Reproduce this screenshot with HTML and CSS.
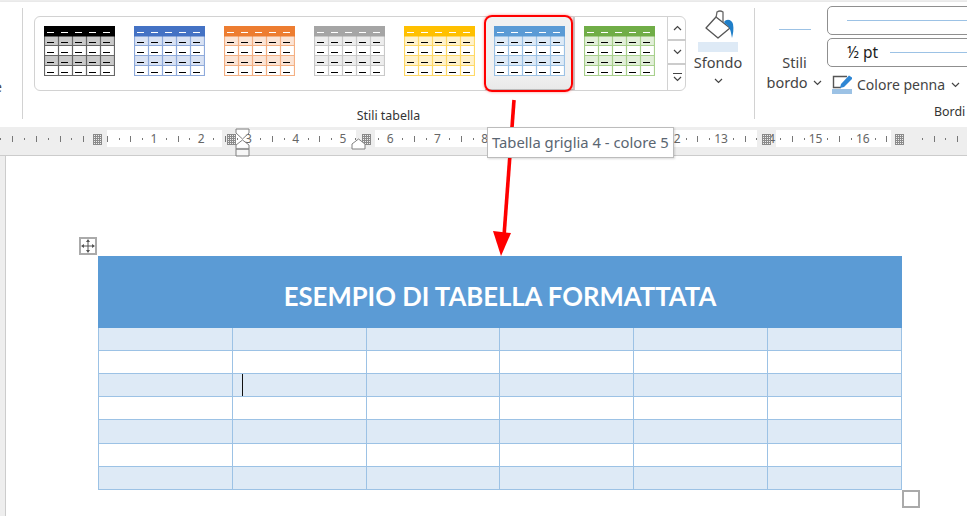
FILE: index.html
```html
<!DOCTYPE html>
<html lang="it">
<head>
<meta charset="UTF-8">
<meta name="viewport" content="width=device-width, initial-scale=1.0">
<title>Stili tabella</title>
<link rel="stylesheet" href="styles.css">
</head>
<body>

<!-- shared shapes -->
<svg class="defs" width="0" height="0" aria-hidden="true">
  <symbol id="thumb" viewBox="0 0 71 50">
    <rect width="71" height="50" fill="#fff"/>
    <rect y="10" width="71" height="10" style="fill:var(--band)"/>
    <rect y="30" width="71" height="10" style="fill:var(--band)"/>
    <path d="M.5 10V49.5H70.5V10M.5 19.5H70.5M.5 29.5H70.5M.5 39.5H70.5M14.5 10V50M28.5 10V50M42.5 10V50M56.5 10V50" fill="none" stroke-width="1.2" style="stroke:var(--line)"/>
    <rect width="71" height="10.5" style="fill:var(--head)"/>
    <path d="M3 6.5H10M17 6.5H24M31 6.5H38M45 6.5H52M59 6.5H66" stroke="#fff" fill="none"/>
    <path d="M3 16.5H10M17 16.5H24M31 16.5H38M45 16.5H52M59 16.5H66M3 26.5H10M17 26.5H24M31 26.5H38M45 26.5H52M59 26.5H66M3 36.5H10M17 36.5H24M31 36.5H38M45 36.5H52M59 36.5H66M3 46.5H10M17 46.5H24M31 46.5H38M45 46.5H52M59 46.5H66" stroke="#000" fill="none"/>
  </symbol>
  <symbol id="chev" viewBox="0 0 9 6">
    <path d="M1 1L4.5 4.5L8 1" fill="none" stroke="#444" stroke-width="1.2"/>
  </symbol>
</svg>

<div class="page">
  <div class="top-strip"></div>

  <!-- Ribbon -->
  <div class="ribbon">
    <div class="group group-stub"><span class="stub-text">e</span></div>

    <div class="group group-styles">
      <div class="styles-row">
        <div class="gallery">
          <div class="item black"><svg class="thumb"><use href="#thumb"/></svg></div>
          <div class="item blue"><svg class="thumb"><use href="#thumb"/></svg></div>
          <div class="item orange"><svg class="thumb"><use href="#thumb"/></svg></div>
          <div class="item gray"><svg class="thumb"><use href="#thumb"/></svg></div>
          <div class="item yellow"><svg class="thumb"><use href="#thumb"/></svg></div>
          <div class="item sky selected"><svg class="thumb"><use href="#thumb"/></svg><div class="red-box"></div></div>
          <div class="item green"><svg class="thumb"><use href="#thumb"/></svg></div>
          <div class="scroller">
            <div class="scroll-btn"><svg class="chev up"><use href="#chev"/></svg></div>
            <div class="scroll-btn"><svg class="chev"><use href="#chev"/></svg></div>
            <div class="scroll-btn more"><span class="more-bar"></span><svg class="chev"><use href="#chev"/></svg></div>
          </div>
        </div>
        <div class="sfondo">
          <svg class="bucket" viewBox="0 0 36 30">
            <path d="M7 18L17 7L31 18L19 28Z" fill="#fff" stroke="#555" stroke-width="1.3" stroke-linejoin="round"/>
            <path d="M17 8L18 2Q21 0 24 2L24 12" fill="none" stroke="#666" stroke-width="1.3"/>
            <path d="M25 12C28 8 33 10 34 14C35 19 34 24 33 28C32 22 31 17 28 15Q26 14 25 12Z" fill="#1f7fc9"/>
          </svg>
          <div class="sfondo-bar"></div>
          <div class="sfondo-label">Sfondo</div>
          <svg class="chev"><use href="#chev"/></svg>
        </div>
      </div>
      <div class="group-label">Stili tabella</div>
    </div>

    <div class="group group-borders">
      <div class="border-styles">
        <div class="sample-line"></div>
        <div class="bs-label">Stili</div>
        <div class="bs-label">bordo <svg class="chev"><use href="#chev"/></svg></div>
      </div>
      <div class="border-tools">
        <div class="combo"><span class="combo-line first"></span></div>
        <div class="combo"><span class="combo-text">½ pt</span><span class="combo-line"></span></div>
        <div class="pen-row">
          <svg class="pen" viewBox="0 0 20 20">
            <path d="M9 13.5H1.5V2.5H15" fill="none" stroke="#555" stroke-width="1.4"/>
            <path d="M8 14L9 10L17 1.5L20 3.5V5L12 13Z" fill="#2e86d4"/>
            <rect y="15" width="20" height="5" fill="#9cc2e5"/>
          </svg>
          <span>Colore penna</span>
          <svg class="chev"><use href="#chev"/></svg>
        </div>
        <div class="bordi-label">Bordi</div>
      </div>
    </div>
  </div>

  <!-- Ruler -->
  <div class="ruler">
    <div class="ruler-band">
      <span class="rc blank"></span><span class="rc blank"></span><span class="rc blank"></span>
      <span class="rc">1</span><span class="rc">2</span><span class="rc">3</span><span class="rc">4</span>
      <span class="rc">5</span><span class="rc">6</span><span class="rc">7</span><span class="rc">8</span>
      <span class="rc">&nbsp;</span><span class="rc">&nbsp;</span><span class="rc">&nbsp;</span><span class="rc">12</span>
      <span class="rc">13</span><span class="rc">14</span><span class="rc">15</span><span class="rc">16</span>
      <span class="rc">&nbsp;</span><span class="rc blank"></span>
    </div>
    <i class="hatch h1"></i><i class="hatch h2"></i><i class="hatch h3"></i><i class="hatch h4"></i><i class="hatch h5"></i>
    <svg class="indent-top" viewBox="0 0 15 29">
      <path d="M1 1H14V5L7.5 11L1 5ZM7.5 12L14 17V21H1V17ZM1 21H14V28H1Z" fill="#fff" fill-opacity=".55" stroke="#808080"/>
    </svg>
    <svg class="indent-right" viewBox="0 0 15 12">
      <path d="M1 11V6L7.5 1L14 6V11Z" fill="#fff" stroke="#808080"/>
    </svg>
  </div>

  <!-- Document -->
  <div class="doc">
    <div class="gutter"></div>
    <div class="sheet">
      <div class="table-wrap">
        <div class="move-handle">
          <svg viewBox="0 0 14 14" width="14" height="14">
            <path d="M7 1V13M1 7H13" stroke="#555" fill="none"/>
            <path d="M7 0L9 3H5ZM7 14L5 11H9ZM0 7L3 5V9ZM14 7L11 9V5Z" fill="#555"/>
          </svg>
        </div>
        <table class="doc-table">
          <tr class="title-row"><td colspan="6">ESEMPIO DI TABELLA FORMATTATA</td></tr>
          <tr class="band"><td></td><td></td><td></td><td></td><td></td><td></td></tr>
          <tr><td></td><td></td><td></td><td></td><td></td><td></td></tr>
          <tr class="band"><td></td><td><span class="caret"></span></td><td></td><td></td><td></td><td></td></tr>
          <tr><td></td><td></td><td></td><td></td><td></td><td></td></tr>
          <tr class="band tall"><td></td><td></td><td></td><td></td><td></td><td></td></tr>
          <tr><td></td><td></td><td></td><td></td><td></td><td></td></tr>
          <tr class="band"><td></td><td></td><td></td><td></td><td></td><td></td></tr>
        </table>
        <div class="size-handle"></div>
      </div>
    </div>
  </div>

  <!-- Annotation arrow and tooltip -->
  <svg class="arrow" viewBox="0 0 967 516">
    <path d="M514 100L504 236" stroke="#f00" stroke-width="3.6" fill="none"/>
    <path d="M501 256L493 231L511 233Z" fill="#f00"/>
  </svg>
  <div class="tooltip">Tabella griglia 4 - colore 5</div>
</div>

</body>
</html>
```

FILE: styles.css
```css
:root { --ui-text:#444; --rule:#d2d2d2; --line-blue:#9cc2e5; --band-blue:#deeaf6; --head-blue:#5b9bd5; }
*{box-sizing:border-box;}
html,body{margin:0;padding:0;background:#fff;}
body{font-family:"Noto Sans","Open Sans",sans-serif;font-size:14px;color:var(--ui-text);width:967px;height:516px;overflow:hidden;}
.defs{position:absolute;}
.page{position:relative;width:967px;height:516px;overflow:hidden;}
.top-strip{height:2px;background:#ededed;}

/* Ribbon */
.ribbon{display:flex;height:125px;background:#fff;box-shadow:0 1px 2px rgba(0,0,0,.25);position:relative;overflow:hidden;}
.group{margin-top:6px;height:111px;flex:none;}
.group-stub{width:23px;border-right:1px solid var(--rule);position:relative;overflow:hidden;}
.stub-text{position:absolute;left:-6px;top:69px;}
.group-styles{width:732px;border-right:1px solid var(--rule);display:flex;flex-direction:column;}
.styles-row{display:flex;align-items:flex-start;padding-left:11px;}
.gallery{display:flex;width:652px;height:75px;margin-top:8px;border:1px solid var(--rule);border-radius:6px;flex:none;}
.item{width:90px;height:73px;padding:9px 0 0 9px;position:relative;flex:none;}
.thumb{display:block;width:71px;height:50px;}
.black{--head:#000;--band:#c9c9c9;--line:#666;}
.blue{--head:#4472c4;--band:#d9e2f3;--line:#8eaadb;}
.orange{--head:#ed7d31;--band:#fbe4d5;--line:#f4b083;}
.gray{--head:#a5a5a5;--band:#ededed;--line:#c9c9c9;}
.yellow{--head:#ffc000;--band:#fff2cc;--line:#ffd966;}
.sky{--head:#5b9bd5;--band:#deeaf6;--line:#9cc2e5;}
.green{--head:#70ad47;--band:#e2efd9;--line:#a8d08d;}
.selected{background:linear-gradient(#f1f1f1,#f1f1f1 80%,#e9e9e9);border-right:2px solid #ccc;border-bottom:1px solid #bbb;}
.red-box{position:absolute;left:-1px;top:-2px;width:89px;height:77px;border:2.5px solid #f00;border-radius:8px;box-shadow:0 0 3px rgba(255,0,0,.45);}
.scroller{margin-left:2px;width:19px;flex:none;border-left:1px solid var(--rule);display:flex;flex-direction:column;}
.scroll-btn{height:24px;display:flex;flex-direction:column;align-items:center;justify-content:center;border-bottom:2px solid #ccc;}
.scroll-btn.more{border-bottom:none;height:25px;}
.more-bar{width:9px;height:1px;background:#444;margin-bottom:2px;}
.chev{width:9px;height:6px;display:inline-block;}
.chev.up{transform:scaleY(-1);}
.sfondo{width:64px;display:flex;flex-direction:column;align-items:center;}
.bucket{width:36px;height:30px;margin:2px 0 0 -3px;display:block;}
.sfondo-bar{width:40px;height:10px;background:var(--band-blue);margin-top:2px;}
.sfondo-label{line-height:20px;font-size:14.5px;}
.sfondo .chev{margin-top:6px;}
.group-label{text-align:center;font-size:12.4px;line-height:16px;margin-top:17px;color:#333;}

.group-borders{display:flex;width:300px;}
.border-styles{width:72px;text-align:center;padding-left:7px;}
.sample-line{width:32px;height:1px;background:var(--line-blue);margin:21px 0 0 17px;}
.bs-label{line-height:20px;font-size:14.5px;white-space:nowrap;}
.border-styles .sample-line + .bs-label{margin-top:22px;}
.bs-label .chev{margin-left:2px;vertical-align:2px;}
.border-tools{flex:none;width:200px;margin-top:-2px;}
.combo{height:29px;border:1px solid #8f8f8f;border-radius:5px;margin-bottom:3px;display:flex;align-items:center;padding-left:19px;}
.combo-line{height:1px;background:var(--line-blue);flex:1;}
.combo-text{width:43px;font-size:15.5px;color:#222;line-height:16px;margin-top:-2px;}
.pen-row{display:flex;align-items:center;margin-top:8px;padding-left:5px;font-size:14px;white-space:nowrap;}
.pen{width:20px;height:20px;margin-right:5px;flex:none;margin-top:-1px;}
.pen-row .chev{margin-left:6px;}
.bordi-label{font-size:12.4px;line-height:16px;margin:10px 0 0 107px;color:#333;}

/* Ruler */
.ruler{position:relative;height:29px;background:#eee;border-bottom:1px solid #ccc;padding-top:3px;}
.ruler-band{height:17px;display:flex;margin-left:0;background:linear-gradient(to right,#eee 107px,#fff 107px 222px,#eee 222px 236px,#fff 236px 356px,#eee 356px 375px,#fff 375px 757px,#eee 757px 776px,#fff 776px 891px,#eee 891px);}
.rc{flex:none;width:47.25px;font-size:12px;line-height:17px;text-align:center;color:#666;
  background-image:linear-gradient(#777,#777),linear-gradient(#777,#777),linear-gradient(#777,#777);
  background-size:1px 6px,1px 2px,1px 2px;background-position:0 50%,11.8px 50%,35.4px 50%;background-repeat:no-repeat;}
.rc.blank{background-image:linear-gradient(#777,#777),linear-gradient(#777,#777),linear-gradient(#777,#777),linear-gradient(#777,#777);
  background-size:1px 6px,1px 6px,1px 2px,1px 2px;background-position:0 50%,23.6px 50%,11.8px 50%,35.4px 50%;}
.ruler-band .rc:first-child{margin-left:-11.35px;}
.hatch{position:absolute;top:7px;width:9px;height:11px;background-color:#eee;
  background-image:repeating-linear-gradient(90deg,#8a8a8a 0 1.4px,transparent 1.4px 2px),repeating-linear-gradient(0deg,#8a8a8a 0 1.4px,transparent 1.4px 2px);}
.h1{left:93px;} .h2{left:227px;} .h3{left:362px;} .h4{left:762px;} .h5{left:895px;}
.indent-top{position:absolute;left:235px;top:1px;width:15px;height:29px;}
.indent-right{position:absolute;left:351px;top:11px;width:15px;height:12px;}

/* Document */
.doc{display:flex;height:360px;background:#fff;}
.gutter{width:6px;background:#eee;border-right:1px solid #ccc;flex:none;}
.sheet{flex:1;padding:100px 0 0 92px;}
.table-wrap{position:relative;width:804px;}
.doc-table{width:804px;border-collapse:collapse;table-layout:fixed;}
.doc-table td{height:23px;border:1px solid var(--line-blue);padding:0 0 0 9px;}
.doc-table .tall td{height:24px;}
.band td{background:var(--band-blue);}
.title-row td{height:71px;background:var(--head-blue);border-color:var(--head-blue);padding:8px 0 0;text-align:center;color:#fff;font-family:Lato,"Noto Sans",sans-serif;font-weight:700;font-size:25.7px;}
.caret{display:block;width:1px;height:22px;background:#111;}
.move-handle{position:absolute;left:-19px;top:-19px;width:18px;height:18px;border:2px solid #aaa;background:#fff;display:flex;align-items:center;justify-content:center;}
.move-handle svg{flex:none;}
.size-handle{position:absolute;left:804px;top:234px;width:18px;height:18px;border:2px solid #aaa;background:#fff;}

/* Annotation */
.arrow{position:absolute;left:0;top:0;width:967px;height:516px;pointer-events:none;}
.tooltip{position:absolute;left:487px;top:127px;width:187px;height:31px;background:#fff;border:1px solid #bcbcbc;box-shadow:1px 1px 2px rgba(0,0,0,.15);font-size:14.8px;line-height:29px;padding-left:4px;color:#5a6672;white-space:nowrap;}
```
